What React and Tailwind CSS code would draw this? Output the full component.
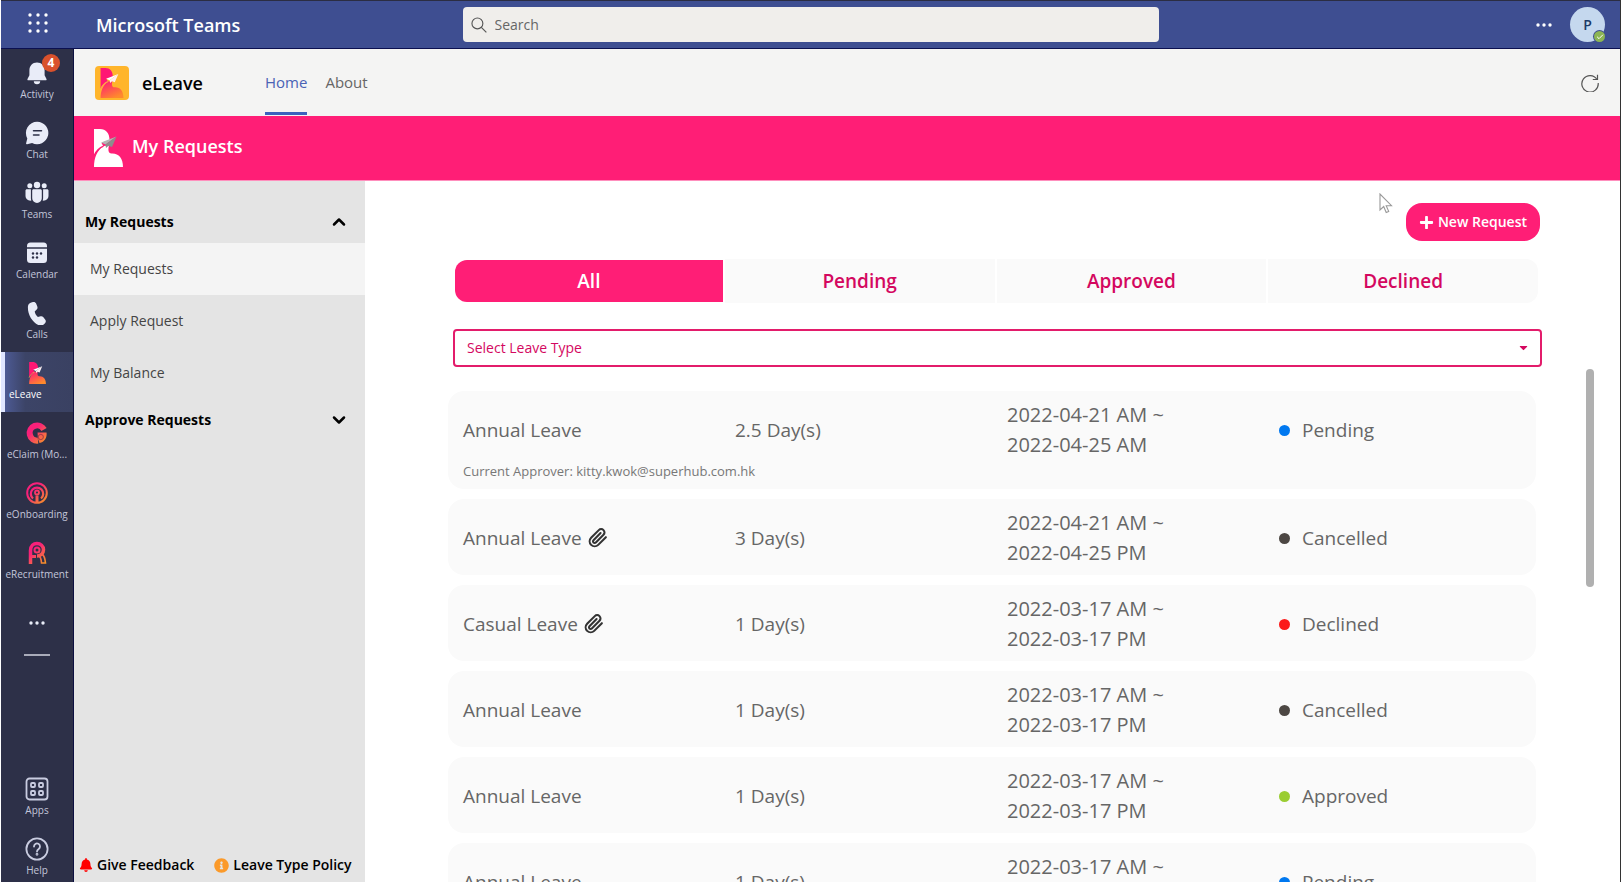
import React, { useState } from "react";
import { FaPlus, FaBell, FaInfoCircle, FaCaretDown } from "react-icons/fa";
import { FiChevronUp, FiChevronDown, FiCheck, FiPaperclip } from "react-icons/fi";

const TABS = ["All", "Pending", "Approved", "Declined"];

const REQUESTS = [
  { id: 1, type: "Annual Leave", days: "2.5", from: "2022-04-21 AM", to: "2022-04-25 AM", status: "Pending", approver: "kitty.kwok@superhub.com.hk" },
  { id: 2, type: "Annual Leave", days: "3", from: "2022-04-21 AM", to: "2022-04-25 PM", status: "Cancelled", file: true },
  { id: 3, type: "Casual Leave", days: "1", from: "2022-03-17 AM", to: "2022-03-17 PM", status: "Declined", file: true },
  { id: 4, type: "Annual Leave", days: "1", from: "2022-03-17 AM", to: "2022-03-17 PM", status: "Cancelled" },
  { id: 5, type: "Annual Leave", days: "1", from: "2022-03-17 AM", to: "2022-03-17 PM", status: "Approved" },
  { id: 6, type: "Annual Leave", days: "1", from: "2022-03-17 AM", to: "2022-03-17 PM", status: "Pending" },
];

const DOT = {
  Pending: "bg-[#0078f0]",
  Cancelled: "bg-[#4c4743]",
  Declined: "bg-[#fb1a1a]",
  Approved: "bg-[#9acd32]",
};

/* ── Rail icons ── */
const BellIcon = () => (
  <svg width="24" height="24" viewBox="0 0 24 24" fill="#e9ecf8">
    <path d="M12 1.500c-4.600 0-7.600 3.400-7.600 7.800v5L2.500 18c-.3.7.1 1.300.8 1.300h17.400c.7 0 1.100-.6.8-1.300l-1.900-3.700V9.300C19.600 4.900 16.600 1.500 12 1.500z" />
    <path d="M8.800 20.300h6.400a3.200 3 0 0 1-6.400 0z" />
  </svg>
);

const ChatIcon = () => (
  <svg width="24" height="24" viewBox="0 0 24 24">
    <path d="M12.200.8a11.200 11.200 0 1 1-5.100 21.200l-5 1.300c-.7.200-1.200-.4-1-1l1.200-4.900A11.200 11.200 0 0 1 12.200.8z" fill="#e9ecf8" />
    <path d="M8.500 9.800h8M8.500 14h5.500" stroke="#2d3048" strokeWidth="1.500" strokeLinecap="round" />
  </svg>
);

const TeamsIcon = () => (
  <svg width="26" height="24" viewBox="0 0 26 24" fill="#e9ecf8">
    <circle cx="5.800" cy="4.800" r="2.500" />
    <circle cx="20.200" cy="4.800" r="2.500" />
    <circle cx="13" cy="4" r="3.200" />
    <path d="M1.500 9.600c0-.8.600-1.400 1.400-1.400h4v9c0 .9.200 1.700.5 2.400-3.300.5-5.900-1.700-5.900-4.800z" />
    <path d="M24.500 9.600c0-.8-.6-1.400-1.400-1.400h-4v9c0 .9-.2 1.700-.5 2.400 3.300.5 5.900-1.700 5.900-4.800z" />
    <path d="M8.200 9.600c0-.8.600-1.400 1.400-1.400h6.800c.8 0 1.400.6 1.400 1.400v7.600a4.800 4.800 0 0 1-9.600 0z" />
  </svg>
);

const CalendarIcon = () => (
  <svg width="24" height="24" viewBox="0 0 24 24">
    <path d="M2 6.200V5a3.500 3.500 0 0 1 3.500-3.500h13A3.500 3.500 0 0 1 22 5v1.200z" fill="#e9ecf8" />
    <path d="M2 7.700h20v10.800a3.500 3.500 0 0 1-3.500 3.500h-13A3.500 3.500 0 0 1 2 18.500z" fill="#e9ecf8" />
    <g fill="#2d3048">
      <circle cx="8" cy="12.500" r="1.200" />
      <circle cx="12" cy="12.500" r="1.200" />
      <circle cx="16" cy="12.500" r="1.200" />
      <circle cx="8" cy="16.500" r="1.200" />
      <circle cx="12" cy="16.500" r="1.200" />
    </g>
  </svg>
);

const CallsIcon = () => (
  <svg width="24" height="24" viewBox="0 0 24 24" fill="#e9ecf8">
    <path d="M6.300 1.600 8 1.100c1.300-.4 2.600.3 3.100 1.500l1.200 3c.4 1 .2 2.200-.6 3l-2 1.900c.3 1.900 1.500 4 3.200 5.600l2.700-.8c1-.3 2.100.1 2.800 1l1.900 2.500c.8 1.100.7 2.500-.3 3.400l-1.300 1.200c-1.300 1.200-3.200 1.600-4.800.9C7 21.300 2.200 12.800 3 5c.2-1.600 1.700-3 3.300-3.400z" />
  </svg>
);

const LeaveMark = ({ size, id, plain }) => (
  <svg width={size} height={size} viewBox="-1 0 38 38">
    <defs>
      <linearGradient id={id} x1="0" y1="0" x2="0.600" y2="1">
        <stop offset="0.200" stopColor="#ff2a6c" />
        <stop offset="1" stopColor="#ff8a2c" />
      </linearGradient>
    </defs>
    <path
      d="M1 0h6c6 0 9.500 4 9.500 11L8.500 14l2 3.500C6 19 3 22 1 26z"
      fill={plain ? "#fff" : "#ff1774"}
    />
    <path
      d="M1 38c0-9 3-16.500 9.500-21l5.500-.5c-1 3.500-1 8 2.500 8 7-.5 11.500 4.500 11.500 13.500z"
      fill={plain ? "#fff" : `url(#${id})`}
    />
    <path d="M1 27c1.500-4 5-8 9.500-9.800" stroke={plain ? "#ff1e76" : "#ffa04a"} strokeWidth="1.400" fill="none" />
    <path d="M23.500 7.500 8 13.500l4.500 2z" fill={plain ? "#b5b5b5" : "#fff"} />
    <path d="M23.500 7.500 12.500 15.500l.5 3.500 2.500-2.300 3.500 1.300z" fill={plain ? "#8d8d8d" : "#fff0f0"} />
  </svg>
);

const AppTile = () => (
  <span className="flex size-[34px] shrink-0 items-end justify-center overflow-hidden rounded bg-[#ffb52b] pl-1">
    <LeaveMark size={34} id="tile" />
  </span>
);

const BrandGradient = ({ id }) => (
  <defs>
    <linearGradient id={id} gradientUnits="userSpaceOnUse" x1="4" y1="4" x2="20" y2="21">
      <stop offset="0.300" stopColor="#f8207a" />
      <stop offset="1" stopColor="#f7902a" />
    </linearGradient>
  </defs>
);

const ClaimIcon = () => (
  <svg width="24" height="24" viewBox="0 0 24 24" fill="none">
    <BrandGradient id="claim" />
    <path d="M19 8.500A7.600 7.600 0 1 0 13 19.600" stroke="url(#claim)" strokeWidth="6" />
    <path d="M12.500 11.500h9c.8 5-2 9.500-7 10.500l-1.500-4z" fill="url(#claim)" />
    <circle cx="15.800" cy="16" r="2.600" stroke="#a33a45" strokeWidth="1" />
  </svg>
);

const OnboardingIcon = () => (
  <svg width="24" height="24" viewBox="0 0 24 24" fill="none" stroke="url(#onboard)">
    <BrandGradient id="onboard" />
    <circle cx="12" cy="12" r="9.800" strokeWidth="2" />
    <path d="M8 17.500a6.200 6.200 0 1 1 8 0" strokeWidth="2.200" />
    <circle cx="12" cy="11.500" r="2" strokeWidth="1.800" />
    <path d="M12 14.500v6.500" strokeWidth="3" />
  </svg>
);

const RecruitIcon = () => (
  <svg width="24" height="24" viewBox="0 0 24 24" fill="none" stroke="url(#recruit)">
    <BrandGradient id="recruit" />
    <path d="M5.500 23V9.500c0-4.500 3-7 6.500-7s6.500 2.800 6.500 6.300S15.500 15 12 15" strokeWidth="3.500" />
    <circle cx="12" cy="9" r="2.500" strokeWidth="2" />
    <path d="M13 15c2.500.5 3 2 3.500 7h4c-.5-5-1.200-7.500-3.500-9" strokeWidth="1.600" />
    <path d="M7 15.500h4" strokeWidth="3" />
  </svg>
);

const AppsIcon = () => (
  <svg width="24" height="24" viewBox="0 0 24 24" fill="none" stroke="#c9cce0" strokeWidth="1.800">
    <rect x="1.500" y="1.500" width="21" height="21" rx="3" />
    <rect x="6" y="6" width="4" height="4" rx="1" />
    <rect x="14" y="6" width="4" height="4" rx="1" />
    <rect x="6" y="14" width="4" height="4" rx="1" />
    <rect x="14" y="14" width="4" height="4" rx="1" />
  </svg>
);

const HelpIcon = () => (
  <svg width="24" height="24" viewBox="0 0 24 24" fill="none" stroke="#c9cce0" strokeWidth="1.800">
    <circle cx="12" cy="12" r="10.600" />
    <path d="M9 9.500a3 3 0 1 1 4.700 2.400c-1 .7-1.700 1.200-1.700 2.600" strokeLinecap="round" />
    <circle cx="12" cy="17.300" r="0.500" />
  </svg>
);

const RAIL = [
  { label: "Activity", icon: <BellIcon />, badge: 4 },
  { label: "Chat", icon: <ChatIcon /> },
  { label: "Teams", icon: <TeamsIcon /> },
  { label: "Calendar", icon: <CalendarIcon /> },
  { label: "Calls", icon: <CallsIcon /> },
  { label: "eLeave", icon: <LeaveMark size={22} id="rail" />, active: true },
  { label: "eClaim (Mo...", icon: <ClaimIcon /> },
  { label: "eOnboarding", icon: <OnboardingIcon /> },
  { label: "eRecruitment", icon: <RecruitIcon /> },
];

const RailItem = ({ label, icon, badge, active }) => (
  <button
    className={`relative flex h-[60px] w-full shrink-0 flex-col items-center pt-2 ${
      active
        ? "border-l-4 border-[#dfe5ff] bg-linear-to-r from-[#4d5a94] via-[#3c4467] via-30% to-[#3a4162] text-white"
        : "text-[#c3c6da]"
    }`}
  >
    <span className="flex h-[26px] items-center">{icon}</span>
    <span className={`text-[10px] leading-4 whitespace-nowrap ${active ? "self-start pl-1" : ""}`}>{label}</span>
    {badge && (
      <span className="absolute top-0.5 left-[41px] flex size-[18px] items-center justify-center rounded-full bg-[#d9512c] text-xs font-bold text-white">
        {badge}
      </span>
    )}
  </button>
);

const Dots = () => (
  <svg width="18" height="6" viewBox="0 0 18 6" fill="currentColor">
    <circle cx="3" cy="3" r="1.700" />
    <circle cx="9" cy="3" r="1.700" />
    <circle cx="15" cy="3" r="1.700" />
  </svg>
);

const RequestCard = ({ item }) => (
  <li className="rounded-2xl bg-[#fafafa] pt-[9px] pb-[7px] text-[19px] leading-[30px] text-[#666]">
    <div className="grid grid-cols-4 items-center">
      <div className="flex items-center gap-1.5 pl-[15px]">
        {item.type}
        {item.file && <FiPaperclip size={20} strokeWidth={2.500} className="text-[#333]" />}
      </div>
      <div className="pl-[15px]">{item.days} Day(s)</div>
      <div className="pl-[15px] text-xl leading-[30px]">
        <p>{item.from} ~</p>
        <p>{item.to}</p>
      </div>
      <div className="flex items-center gap-3 pl-[15px]">
        <span className={`size-[11px] rounded-full ${DOT[item.status]}`} />
        {item.status}
      </div>
    </div>
    {item.approver && (
      <p className="pl-[15px] text-[13px] leading-[22px] text-[#777]">Current Approver: {item.approver}</p>
    )}
  </li>
);

const App = () => {
  const [tab, setTab] = useState("All");
  const [open, setOpen] = useState(true);

  const list = tab === "All" ? REQUESTS : REQUESTS.filter((r) => r.status === tab);

  return (
    <div className="flex h-screen flex-col overflow-hidden border-r border-l border-r-[#333] border-l-white bg-white font-['Open_Sans',sans-serif] text-[#222]">

      {/* ── Top bar ── */}
      <header className="flex h-[49px] shrink-0 items-center border-t border-b border-t-[#2b2d42] border-b-[#0b1050] bg-[#3e4e91]">
        <button aria-label="App launcher" className="flex w-[73px] justify-center pb-1 text-white">
          <svg width="20" height="20" viewBox="0 0 20 20" fill="currentColor">
            {[2, 10, 18].map((y) =>
              [2, 10, 18].map((x) => <circle key={`${x}-${y}`} cx={x} cy={y} r="1.700" />)
            )}
          </svg>
        </button>
        <div className="w-[24%] pl-[22px] text-lg font-semibold text-white">Microsoft Teams</div>
        <label className="flex h-[35px] w-[43%] items-center gap-2 rounded bg-[#f0eeeb] px-2">
          <svg width="16" height="16" viewBox="0 0 17 17" fill="none" stroke="#555" strokeWidth="1.200">
            <circle cx="6.800" cy="6.800" r="5.800" />
            <path d="m11 11 5.300 5.300" />
          </svg>
          <input
            aria-label="Search"
            placeholder="Search"
            className="min-w-0 flex-1 bg-transparent text-sm outline-none placeholder:text-[#666]"
          />
        </label>
        <div className="flex flex-1 items-center justify-end gap-[17px] pr-[15px] text-white">
          <button aria-label="More"><Dots /></button>
          <button className="relative flex size-[35px] items-center justify-center rounded-full bg-[#c5d8ee] text-sm font-semibold text-[#1c3a66]">
            P
            <span className="absolute right-0 bottom-0 flex size-[11px] items-center justify-center rounded-full bg-[#8cb554] text-white ring-1 ring-[#3e4e91]">
              <FiCheck size={8} strokeWidth={3} />
            </span>
          </button>
        </div>
      </header>

      <div className="flex min-h-0 flex-1">

        {/* ── App rail ── */}
        <nav className="flex w-[73px] shrink-0 flex-col border-r border-[#0c1040] bg-[#2d3048] pt-[3px]">
          {RAIL.map((r) => (
            <RailItem key={r.label} {...r} />
          ))}
          <button aria-label="More apps" className="flex h-[62px] items-center justify-center text-[#e9ecf8]">
            <Dots />
          </button>
          <div className="mx-auto h-0.5 w-[26px] bg-[#a9abba]" />
          <div className="mt-auto -mb-1.5">
            <RailItem label="Apps" icon={<AppsIcon />} />
            <RailItem label="Help" icon={<HelpIcon />} />
          </div>
        </nav>

        <div className="flex min-w-0 flex-1 flex-col">

          {/* ── App header ── */}
          <div className="flex h-[67px] shrink-0 items-center bg-[#f4f4f3] pr-[21px] pl-[21px]">
            <AppTile />
            <h1 className="w-[136px] pl-[13px] text-lg font-semibold text-black">eLeave</h1>
            <div className="flex h-full gap-[18px] pb-px text-[15px]">
              <a href="#home" className="flex items-center border-b-3 border-[#3b62bd] pt-1 text-[#4a62b5]">Home</a>
              <a href="#about" className="flex items-center border-b-3 border-transparent pt-1 text-[#666]">About</a>
            </div>
            <button aria-label="Refresh" className="ml-auto text-[#555]">
              <svg width="18" height="18" viewBox="0 0 18 18" fill="none" stroke="currentColor" strokeWidth="1.200">
                <path d="M16 5.500A8.200 8.200 0 1 0 17.200 9" />
                <path d="M16.500.800V5.500H11.800" />
              </svg>
            </button>
          </div>

          {/* ── Page title ── */}
          <div className="flex h-[65px] shrink-0 items-center border-b border-[#ff8fbd] bg-[#ff1e76] pl-[18px]">
            <LeaveMark size={38} id="title" plain />
            <h2 className="pb-1 pl-0.5 text-lg font-semibold text-white">My Requests</h2>
          </div>

          <div className="flex min-h-0 flex-1">

            {/* ── Side menu ── */}
            <aside className="flex w-[291px] shrink-0 flex-col bg-[#e4e4e4] pt-5">
              <button
                onClick={() => setOpen(!open)}
                className="flex h-[42px] items-center justify-between pr-4 pl-[11px] text-sm font-bold text-black"
              >
                My Requests
                {open ? <FiChevronUp size={20} strokeWidth={3} /> : <FiChevronDown size={20} strokeWidth={3} />}
              </button>
              {open && (
                <div className="flex flex-col text-sm text-[#444]">
                  <a href="#requests" className="flex h-[52px] items-center bg-[#f4f4f4] pl-4">My Requests</a>
                  <a href="#apply" className="flex h-[52px] items-center pl-4">Apply Request</a>
                  <a href="#balance" className="flex h-[52px] items-center pl-4">My Balance</a>
                </div>
              )}
              <button className="flex h-[42px] items-center justify-between pr-4 pl-[11px] text-sm font-bold text-black">
                Approve Requests
                <FiChevronDown size={20} strokeWidth={3} />
              </button>
              <div className="mt-auto flex items-center gap-5 pb-[7px] pl-[5px] text-sm font-semibold text-black">
                <a href="#feedback" className="flex items-center gap-1">
                  <FaBell size={14} className="text-[#f00]" />
                  Give Feedback
                </a>
                <a href="#policy" className="flex items-center gap-1">
                  <FaInfoCircle size={15} className="text-[#fb9a2a]" />
                  Leave Type Policy
                </a>
              </div>
            </aside>

            {/* ── Requests ── */}
            <main className="relative flex min-w-0 flex-1 flex-col pt-[22px]">
              <div className="flex flex-col pr-[78px] pl-[88px]">
                <button className="mr-0.5 flex h-[38px] items-center gap-1 self-end rounded-2xl bg-[#ff1e76] px-[13px] text-sm font-semibold text-white">
                  <FaPlus size={15} />
                  New Request
                </button>
                <div className="mt-[18px] grid h-11 grid-cols-4 gap-0.5 pr-1 text-[19px] font-semibold">
                  {TABS.map((t) => (
                    <button
                      key={t}
                      onClick={() => setTab(t)}
                      className={`first:rounded-l-xl last:rounded-r-xl ${
                        tab === t ? "my-px ml-0.5 bg-[#ff1e76] text-white" : "bg-[#fafafa] text-[#d4085f]"
                      }`}
                    >
                      {t}
                    </button>
                  ))}
                </div>
                <div className="relative mt-[26px]">
                  <select
                    aria-label="Select Leave Type"
                    className="h-[38px] w-full appearance-none rounded border-2 border-[#e31c6b] bg-white px-3 text-sm text-[#d4085f] outline-none"
                  >
                    <option>Select Leave Type</option>
                    <option>Annual Leave</option>
                    <option>Casual Leave</option>
                  </select>
                  <FaCaretDown size={13} className="pointer-events-none absolute top-3 right-3 text-[#d4085f]" />
                </div>
              </div>

              <div className="mt-0.5 flex min-h-0 flex-1 justify-between pr-[26px] pl-[83px]">
                <ul className="mr-[50px] flex min-w-0 flex-1 flex-col gap-2.5 overflow-hidden pt-[22px]">
                  {list.map((item) => (
                    <RequestCard key={item.id} item={item} />
                  ))}
                </ul>
                <div className="h-[218px] w-2 rounded-full bg-[#b0b0b0]" />
              </div>

              {/* mouse pointer */}
              <svg width="14" height="21" viewBox="0 0 14 21" className="absolute top-3 right-[227px]">
                <path d="M1 1v16l3.700-3.500 2.500 6 2.500-1.100-2.500-5.700H12.500z" fill="#fff" stroke="#999" strokeWidth="1.100" />
              </svg>
            </main>
          </div>
        </div>
      </div>
    </div>
  );
};

export default App;
